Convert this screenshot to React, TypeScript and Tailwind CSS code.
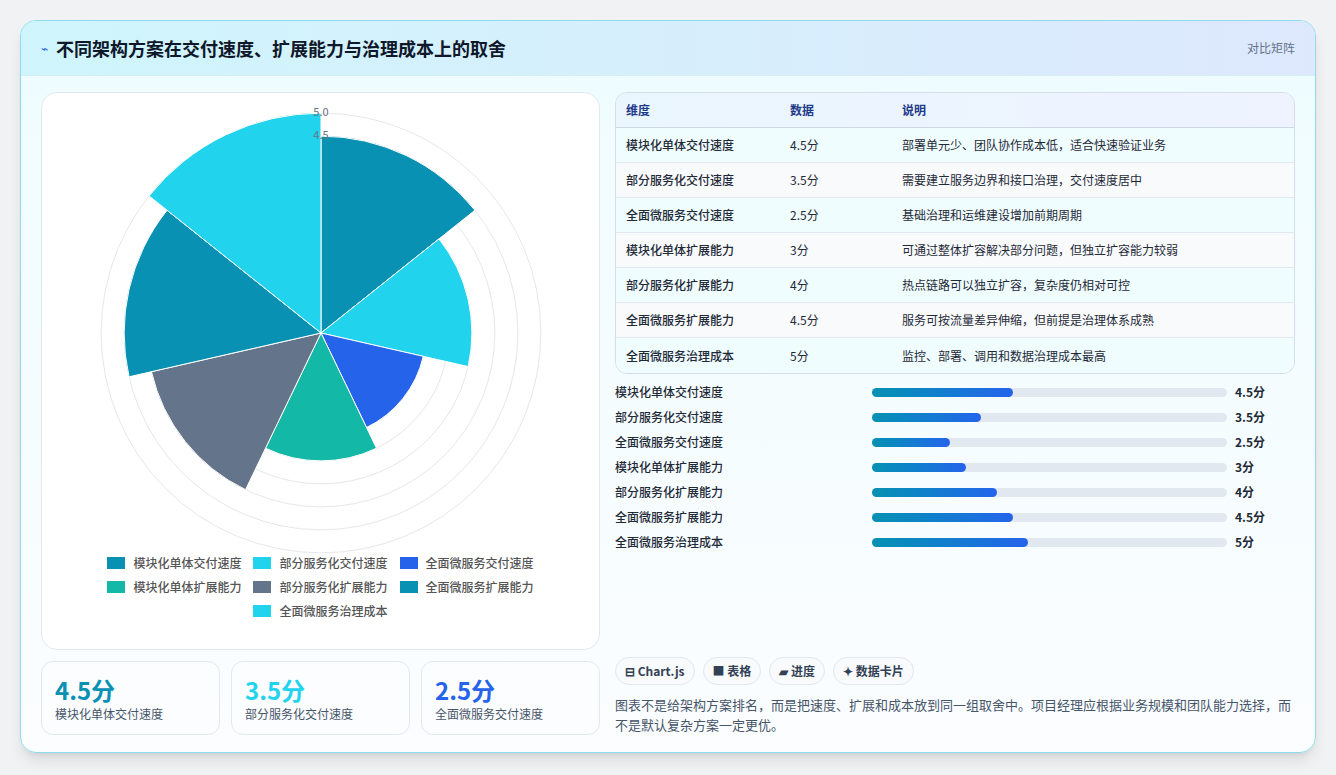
import React from "react"

const rows = [
  { name: "模块化单体交付速度", v: 4.5, note: "部署单元少、团队协作成本低，适合快速验证业务", color: "#0891b2" },
  { name: "部分服务化交付速度", v: 3.5, note: "需要建立服务边界和接口治理，交付速度居中", color: "#22d3ee" },
  { name: "全面微服务交付速度", v: 2.5, note: "基础治理和运维建设增加前期周期", color: "#2563eb" },
  { name: "模块化单体扩展能力", v: 3, note: "可通过整体扩容解决部分问题，但独立扩容能力较弱", color: "#14b8a6" },
  { name: "部分服务化扩展能力", v: 4, note: "热点链路可以独立扩容，复杂度仍相对可控", color: "#64748b" },
  { name: "全面微服务扩展能力", v: 4.5, note: "服务可按流量差异伸缩，但前提是治理体系成熟", color: "#0891b2" },
  { name: "全面微服务治理成本", v: 5, note: "监控、部署、调用和数据治理成本最高", color: "#22d3ee" },
]

const CX = 279
const CY = 240
const rad = (v: number) => 46 * (v - 0.22)

function wedge(i: number, v: number) {
  const step = (Math.PI * 2) / 7
  const a0 = -Math.PI / 2 + i * step
  const a1 = a0 + step
  const r = rad(v)
  const x0 = CX + r * Math.cos(a0), y0 = CY + r * Math.sin(a0)
  const x1 = CX + r * Math.cos(a1), y1 = CY + r * Math.sin(a1)
  return `M${CX},${CY} L${x0},${y0} A${r},${r} 0 0 1 ${x1},${y1} Z`
}

function Polar() {
  const ticks = [1, 1.5, 2, 2.5, 3, 3.5, 4, 4.5, 5]
  return (
    <svg width="558" height="460" viewBox="0 0 558 460">
      {ticks.map((t) => (
        <circle key={t} cx={CX} cy={CY} r={rad(t)} fill="none" stroke="#e5e7eb" strokeWidth="1" />
      ))}
      {rows.map((r, i) => (
        <path key={i} d={wedge(i, r.v)} fill={r.color} stroke="#fff" strokeWidth="1" />
      ))}
      <text x={CX} y={CY - rad(5) + 3} fontSize="11" fill="#6b7280" textAnchor="middle">5.0</text>
      <text x={CX} y={CY - rad(4.5) + 3} fontSize="11" fill="#6b7280" textAnchor="middle">4.5</text>
    </svg>
  )
}

export default function App() {
  return (
    <div className="min-h-screen bg-[#f1f2f4] p-5" style={{ fontFamily: "'Noto Sans CJK SC', 'Noto Sans', sans-serif" }}>
      <div className="overflow-hidden rounded-2xl border border-[#8fdcec] bg-gradient-to-b from-[#eefcff] to-[#fbfdff] shadow-lg">
        <div className="flex h-[55px] items-center justify-between border-b border-[#d5eef6] bg-gradient-to-r from-[#cff5fc] to-[#dde8fd] px-5">
          <div className="flex items-center gap-2">
            <span className="text-xs text-[#2563eb]">⌁</span>
            <h1 className="text-lg font-bold text-[#0f172a]">不同架构方案在交付速度、扩展能力与治理成本上的取舍</h1>
          </div>
          <span className="text-xs text-[#64748b]">对比矩阵</span>
        </div>
        <div className="flex gap-[15px] px-5 pt-4 pb-[17px]">
          <div className="flex w-[559px] flex-col gap-[11px]">
            <div className="flex h-[558px] flex-col rounded-2xl border border-[#e2e8f0] bg-white">
              <div className="h-[460px]"><Polar /></div>
              <div className="flex flex-wrap justify-center gap-x-3 gap-y-1 px-16 text-xs font-medium text-[#555]">
                {rows.map((r) => (
                  <span key={r.name} className="flex items-center gap-2 h-[20px]">
                    <span className="h-[12px] w-[18px]" style={{ background: r.color }} />
                    {r.name}
                  </span>
                ))}
              </div>
            </div>
            <div className="flex gap-[11px]">
              {[["4.5分", "#0891b2", rows[0].name], ["3.5分", "#22d3ee", rows[1].name], ["2.5分", "#2563eb", rows[2].name]].map(([v, c, n]) => (
                <div key={n} className="flex h-[74px] flex-1 flex-col justify-center rounded-xl border border-[#e2e8f0] bg-[#fbfdff] px-[13px]">
                  <div className="text-2xl font-bold leading-8" style={{ color: c }}>{v}</div>
                  <div className="text-xs text-[#475569]">{n}</div>
                </div>
              ))}
            </div>
          </div>
          <div className="flex flex-1 flex-col">
            <div className="overflow-hidden rounded-xl border border-[#d4dde8] text-xs">
              <div className="flex h-[35px] items-center border-b border-[#cfd9e6] bg-gradient-to-r from-[#eaf6fe] to-[#eef3ff] font-semibold text-[#1e3a8a]">
                <div className="w-[174px] pl-[10px]">维度</div>
                <div className="w-[112px]">数据</div>
                <div>说明</div>
              </div>
              {rows.map((r, i) => (
                <div key={r.name} className={`flex h-[35px] items-center text-[#1f2937] ${i < 6 ? "border-b border-[#e2e8f0]" : ""} ${i % 2 ? "bg-[#f8fafc]" : "bg-[#f0fdff]"}`}>
                  <div className="w-[174px] pl-[10px] font-medium">{r.name}</div>
                  <div className="w-[112px]">{r.v}分</div>
                  <div>{r.note}</div>
                </div>
              ))}
            </div>
            <div className="mt-[8px] flex flex-col gap-[5px] text-xs">
              {rows.map((r) => (
                <div key={r.name} className="flex h-[20px] items-center font-medium text-[#1f2937]">
                  <div className="w-[257px]">{r.name}</div>
                  <div className="h-[9px] w-[355px] rounded-full bg-[#e2e8f0]">
                    <div className="h-full rounded-full bg-gradient-to-r from-[#0891b2] to-[#2563eb]" style={{ width: `${r.v * 8.8}%` }} />
                  </div>
                  <div className="ml-2 font-semibold">{r.v}分</div>
                </div>
              ))}
            </div>
            <div className="mt-auto flex gap-2 text-xs font-semibold text-[#334155]">
              {["⊟ Chart.js", "■ 表格", "▰ 进度", "✦ 数据卡片"].map((t) => (
                <span key={t} className="rounded-full border border-[#e2e8f0] bg-[#f8fafc] px-[9px] py-[5px]">{t}</span>
              ))}
            </div>
            <p className="mt-[10px] text-[13px] leading-5 text-[#475569]">
              图表不是给架构方案排名，而是把速度、扩展和成本放到同一组取舍中。项目经理应根据业务规模和团队能力选择，而不是默认复杂方案一定更优。
            </p>
          </div>
        </div>
      </div>
    </div>
  )
}
